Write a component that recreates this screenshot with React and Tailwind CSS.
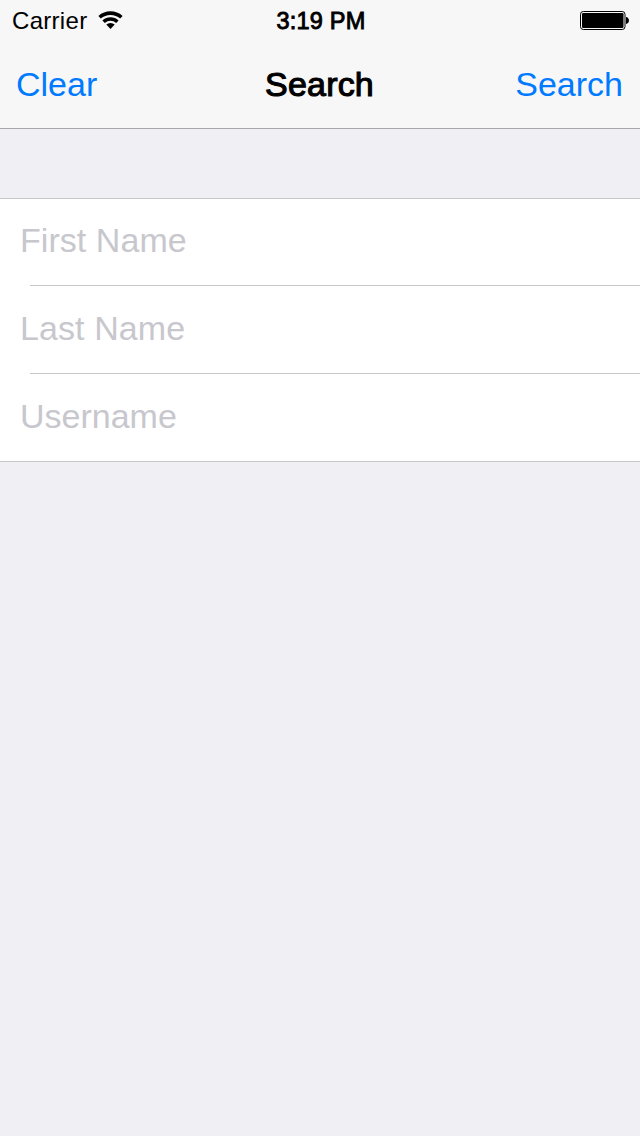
function WifiIcon() {
  return (
    <svg width="26" height="20" viewBox="0 0 26 20" className="block" aria-label="Wi-Fi">
      <path d="M.4 5.9A18.4 18.4 0 0 1 24.6 5.9L22.2 8.6A14.8 14.8 0 0 0 2.8 8.6Z" />
      <path d="M4.4 10.4A12 12 0 0 1 20.6 10.4L18.2 13A8.6 8.6 0 0 0 6.8 13Z" />
      <path d="M8.3 14.6A6.2 6.2 0 0 1 16.7 14.6L12.5 19Z" />
    </svg>
  );
}

function BatteryIcon() {
  return (
    <svg width="50" height="20" viewBox="0 0 50 20" className="block" aria-label="Battery">
      <rect x=".5" y=".5" width="44.5" height="18" rx="2.8" fill="none" stroke="black" />
      <rect x="2" y="2" width="41.5" height="15" rx="1.2" />
      <path d="M46 6C49.9 6.3 49.9 12.7 46 13Z" />
    </svg>
  );
}

export default function App() {
  return (
    <div className="flex h-[1136px] w-[640px] flex-col bg-[#efeff4] font-['Liberation_Sans',sans-serif]">
      <header className="h-[129px] border-b border-[#a7a7aa] bg-[#f7f7f7] text-black">
        <div className="grid h-10 grid-cols-[1fr_auto_1fr] items-center pl-3 pr-[10px] text-[24px]">
          <div className="flex items-center gap-[11px]">
            <span className="pt-0.5 tracking-[0.3px]">Carrier</span>
            <WifiIcon />
          </div>
          <span className="pt-1 text-[23.5px] tracking-[0.2px] [-webkit-text-stroke:0.9px_black]">3:19 PM</span>
          <div className="flex justify-end pt-px"><BatteryIcon /></div>
        </div>
        <div className="grid h-[88px] grid-cols-[1fr_auto_1fr] items-center pl-4 pr-[17px] text-[34px]">
          <button className="text-left text-[#007aff]">Clear</button>
          <h1 className="tracking-[0.2px] [-webkit-text-stroke:1.1px_black]">Search</h1>
          <button className="text-right text-[#007aff]">Search</button>
        </div>
      </header>
      <form className="mt-[69px] border-y border-[#c8c7cc] bg-white text-[34px] text-[#c7c7cd]">
        <div className="flex h-[86px] items-center pb-[3px] pl-5 tracking-[0.05px]">First Name</div>
        <div className="ml-[30px] h-px bg-[#c8c7cc]" />
        <div className="flex h-[87px] items-center pb-[2px] pl-5 tracking-[0.1px]">Last Name</div>
        <div className="ml-[30px] h-px bg-[#c8c7cc]" />
        <div className="flex h-[87px] items-center pb-[2px] pl-5">Username</div>
      </form>
    </div>
  );
}
